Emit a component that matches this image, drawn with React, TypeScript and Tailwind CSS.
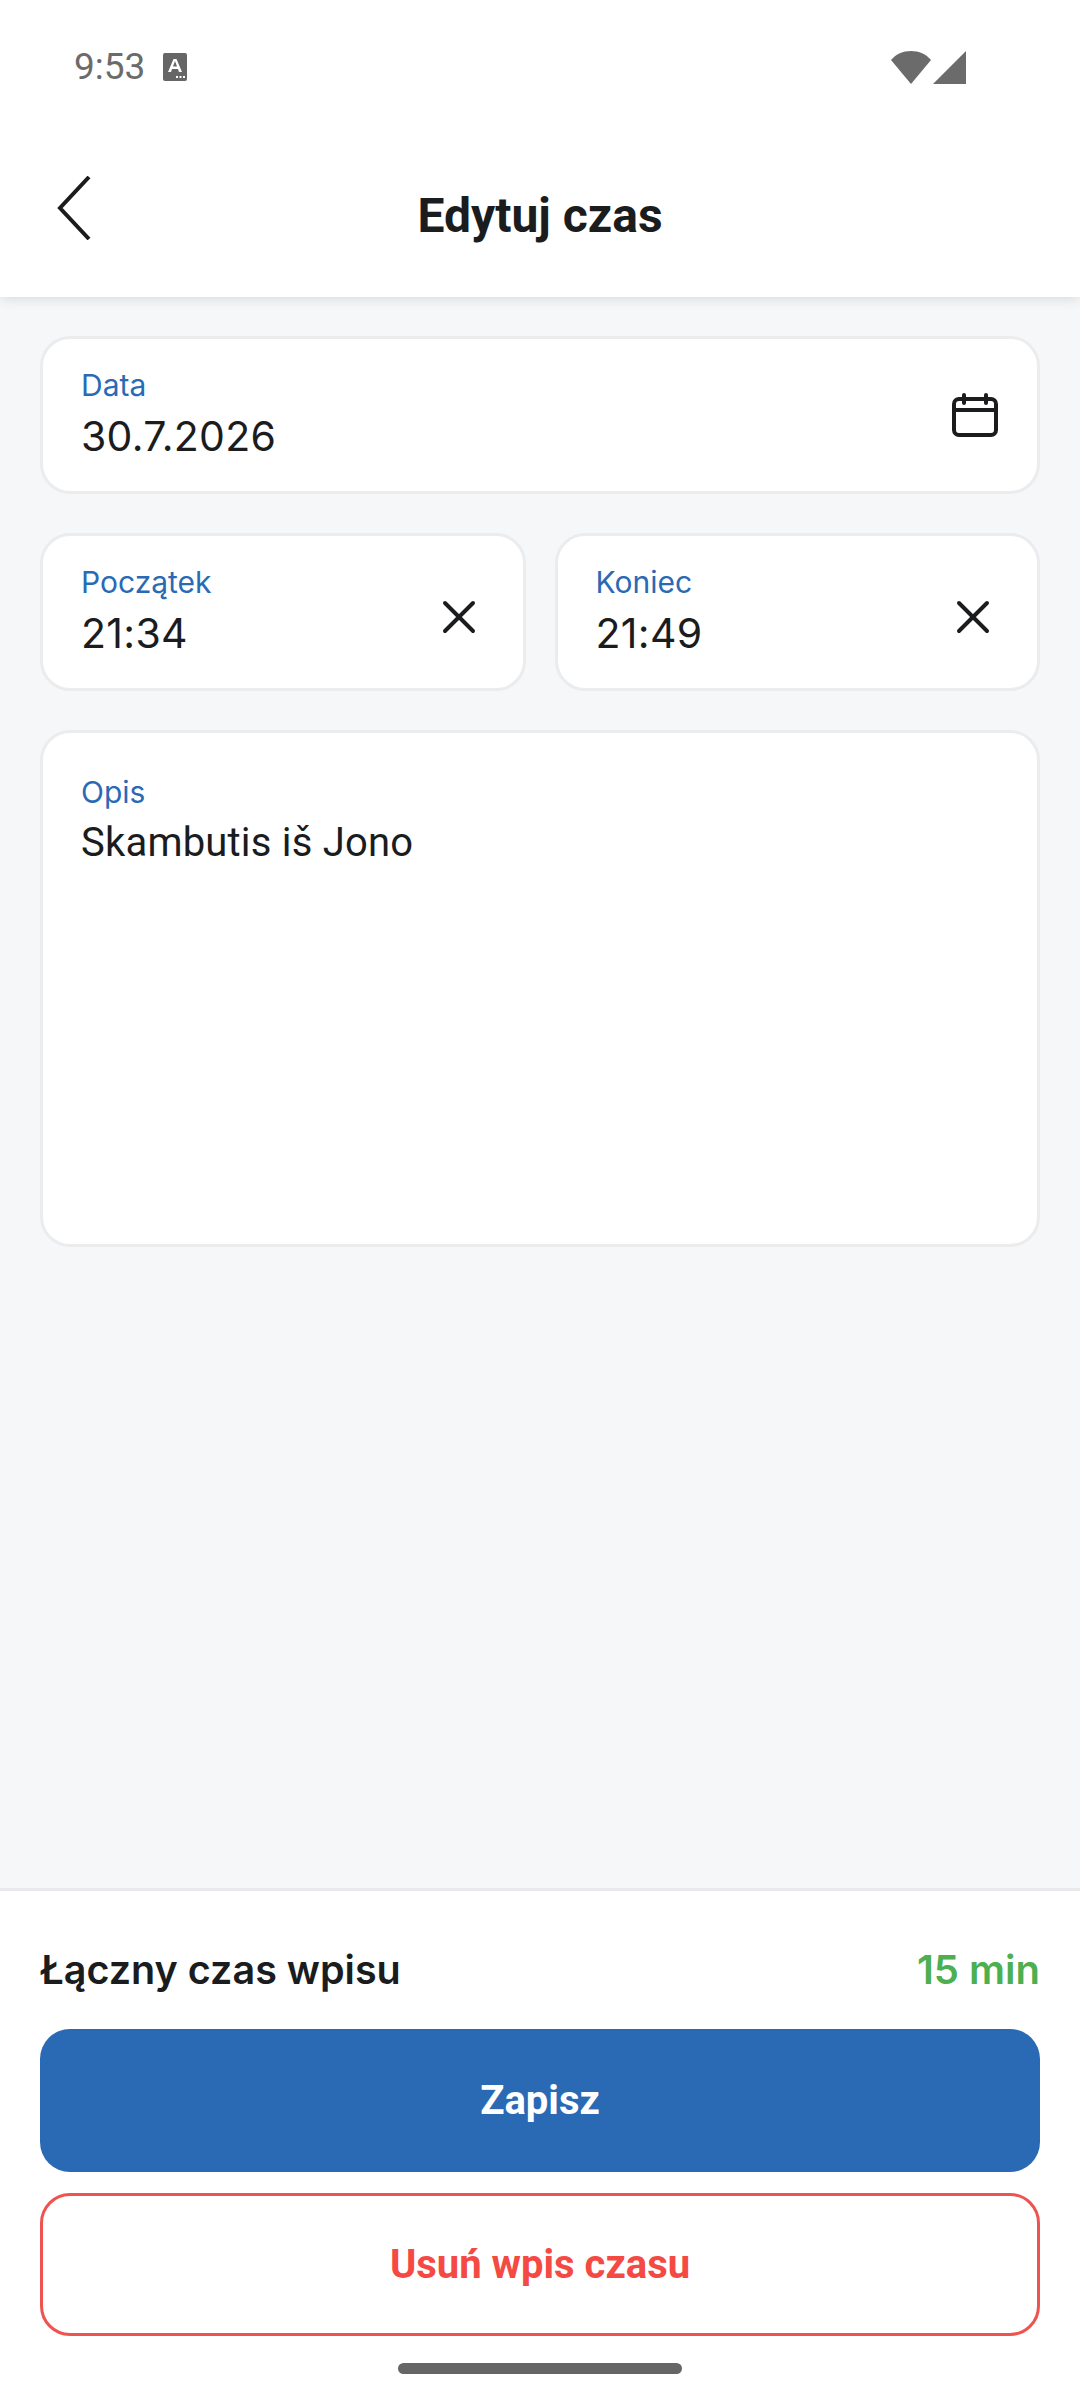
import { ReactNode } from 'react';
import { X } from 'lucide-react';

// Small labelled input card used by every field on the form
function FieldCard({ label, value, right, className, labelTop = 'pt-[28px]', valueClass }: { label: string; value: string; right?: ReactNode; className: string; labelTop?: string; valueClass: string }) {
  return (
    <div className={`relative rounded-[30px] border-[3px] border-[#ebecee] bg-white pl-[38px] pr-[38px] ${className}`}>
      <div className={`${labelTop} text-[30px] leading-[36px] text-[#2a6ab5]`}>{label}</div>
      <div className={`mt-[8px] leading-[50px] text-[#1a1c1e] ${valueClass}`}>{value}</div>
      {right}
    </div>
  );
}

function CalendarIcon() {
  return (
    <svg width="46" height="44" viewBox="0 0 46 44" fill="none" stroke="#1a1c1e" strokeWidth="4" strokeLinecap="round" className="absolute right-[39px] top-[54px]">
      <rect x="2" y="6" width="42" height="36" rx="5" />
      <path d="M2 17h42M12 2v8M34 2v8" />
    </svg>
  );
}

function ClearIcon() {
  return (
    <div className="absolute right-[36px] top-[53px]">
      <X size={56} strokeWidth={1.7} color="#1a1c1e" />
    </div>
  );
}

export default function App() {
  const timeClass = "text-[41px] tracking-[0.3px]";

  return (
    <div className="flex h-[2400px] w-[1080px] flex-col bg-[#f6f7f9] font-['Inter',sans-serif]">
      {/* status bar + title */}
      <header className="relative z-10 h-[297px] bg-white shadow-[0_2px_12px_rgba(0,0,0,0.12)]">
        <div className="flex items-center justify-between pl-[74px] pr-[114px] pt-[44px]">
          <div className="flex items-center gap-[18px]">
            <span className="font-['Roboto',sans-serif] text-[37px] leading-[46px] text-[#6b6b6b]">9:53</span>
            <svg width="24" height="28" viewBox="0 0 24 28">
              <rect width="24" height="28" rx="2" fill="#666" />
              <path d="M5 19 10.500 6h3L19 19h-3l-1-3H9l-1 3zM10 13.500h4L12 8z" fill="#fff" />
              <path d="M13 23h2v2h-2zM16.500 23h2v2h-2zM20 23h2v2h-2z" fill="#fff" />
            </svg>
          </div>
          <svg width="75" height="33" viewBox="0 0 75 33">
            <path d="M20 33 0 9C5 3 12 0 20 0s15 3 20 9z" fill="#6b6b6b" />
            <path d="M42 33 75 0v33z" fill="#6b6b6b" />
          </svg>
        </div>
        <div className="relative mt-[76px] flex h-[100px] items-center justify-center">
          <svg width="34" height="64" viewBox="0 0 34 64" fill="none" stroke="#1a1c1e" strokeWidth="4" className="absolute left-[57px] top-[10px]">
            <path d="M32 1 3 32l29 31" />
          </svg>
          <h1 className="font-['Roboto',sans-serif] text-[48px] font-bold leading-[56px] text-[#1a1c1e]">Edytuj czas</h1>
        </div>
      </header>

      <main className="flex flex-1 flex-col gap-[39px] px-[40px] pt-[39px]">
        <FieldCard label="Data" value="30.7.2026" valueClass={timeClass} right={<CalendarIcon />} className="h-[158px]" />
        <div className="flex gap-[29px]">
          <FieldCard label="Początek" value="21:34" valueClass={timeClass} right={<ClearIcon />} className="h-[158px] flex-1" />
          <FieldCard label="Koniec" value="21:49" valueClass={timeClass} right={<ClearIcon />} className="h-[158px] flex-1" />
        </div>
        <FieldCard
          label="Opis"
          value="Skambutis iš Jono"
          valueClass="font-['Roboto',sans-serif] text-[40px] tracking-[0.2px]"
          labelTop="pt-[41px]"
          className="h-[517px]"
        />
      </main>

      <footer className="h-[512px] border-t-[3px] border-[#e8e9ec] bg-white px-[40px]">
        <div className="flex items-center justify-between pt-[54px] font-semibold leading-[50px]">
          <span className="text-[39.5px] text-[#1a1c1e]">Łączny czas wpisu</span>
          <span className="text-[40px] text-[#4caf50]">15 min</span>
        </div>
        <button className="mt-[34px] block h-[143px] w-full rounded-[30px] bg-[#2a6ab5] font-['Roboto',sans-serif] text-[40px] font-bold text-white">Zapisz</button>
        <button className="mt-[21px] block h-[143px] w-full rounded-[30px] border-[3px] border-[#ef5350] bg-white font-['Roboto',sans-serif] text-[40px] font-bold text-[#f44a43]">Usuń wpis czasu</button>
        <div className="mx-auto mt-[27px] h-[11px] w-[284px] rounded-full bg-[#666]" />
      </footer>
    </div>
  );
}
